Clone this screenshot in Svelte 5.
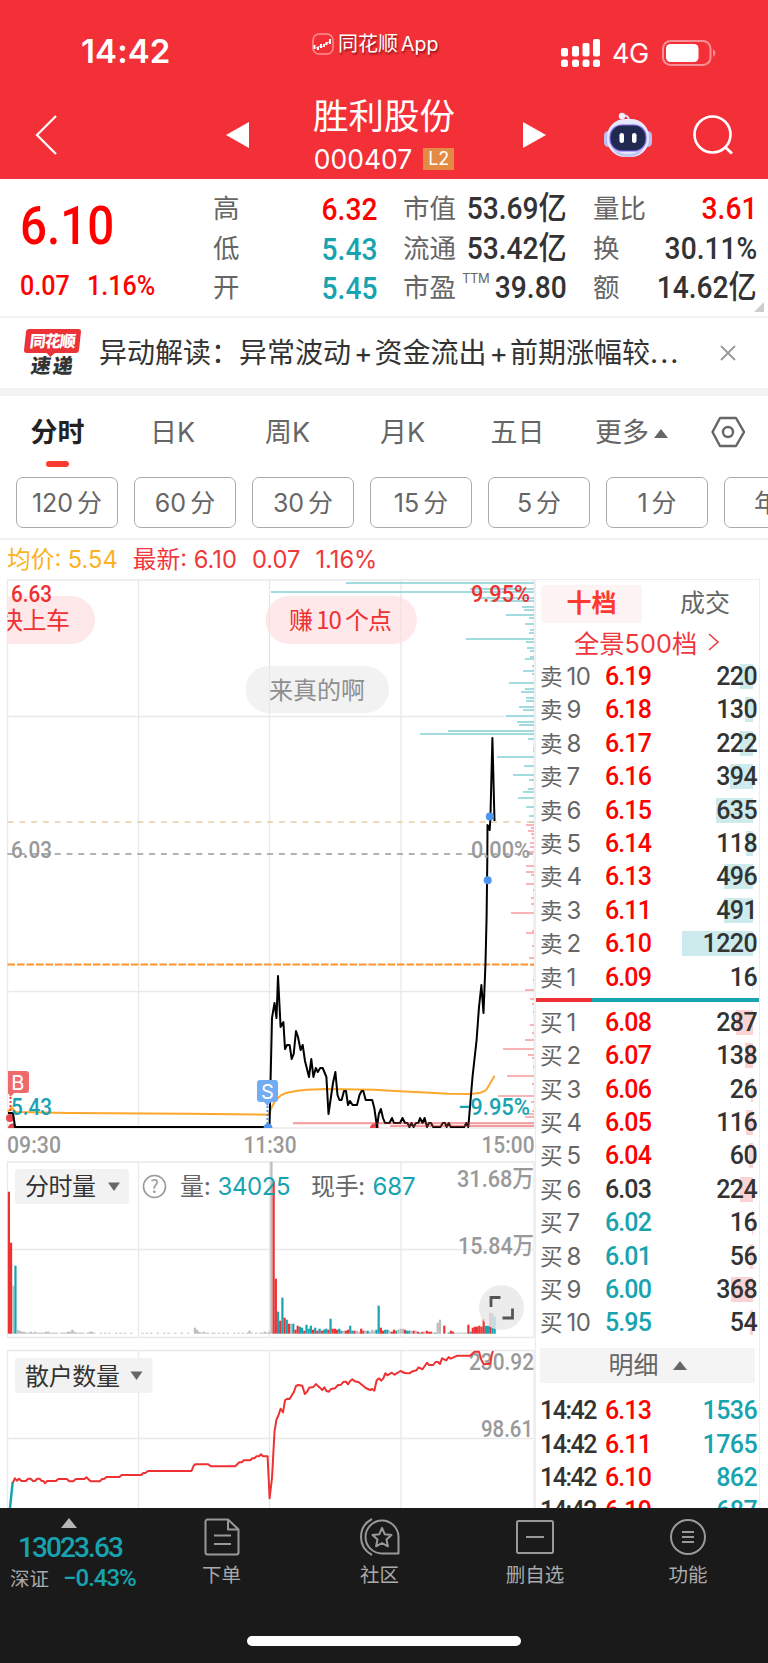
<script lang="ts">
	const stats = [
		[
			{ label: '高', value: '6.32', tone: 'up' },
			{ label: '低', value: '5.43', tone: 'down' },
			{ label: '开', value: '5.45', tone: 'down' }
		],
		[
			{ label: '市值', value: '53.69亿', tone: '' },
			{ label: '流通', value: '53.42亿', tone: '' },
			{ label: '市盈', sup: 'TTM', value: '39.80', tone: '' }
		],
		[
			{ label: '量比', value: '3.61', tone: 'up' },
			{ label: '换', value: '30.11%', tone: '' },
			{ label: '额', value: '14.62亿', tone: '' }
		]
	];

	const tabs = ['分时', '日K', '周K', '月K', '五日'];
	const periods = ['120', '60', '30', '15', '5', '1'];

	const asks = [
		[10, '6.19', 220],
		[9, '6.18', 130],
		[8, '6.17', 222],
		[7, '6.16', 394],
		[6, '6.15', 635],
		[5, '6.14', 118],
		[4, '6.13', 496],
		[3, '6.11', 491],
		[2, '6.10', 1220],
		[1, '6.09', 16]
	];
	const bids = [
		[1, '6.08', 287],
		[2, '6.07', 138],
		[3, '6.06', 26],
		[4, '6.05', 116],
		[5, '6.04', 60],
		[6, '6.03', 224],
		[7, '6.02', 16],
		[8, '6.01', 56],
		[9, '6.00', 368],
		[10, '5.95', 54]
	];
	const trades = [
		['14:42', '6.13', '1536'],
		['14:42', '6.11', '1765'],
		['14:42', '6.10', '862'],
		['14:42', '6.19', '687']
	];

	const prevClose = 6.03;

	function tone(price: any) {
		const p = Number(price);
		if (p > prevClose) return 'up';
		return p < prevClose ? 'down' : '';
	}

	function depthWidth(qty: any) {
		return (qty / 1220) * 71.5;
	}

	// [y, left edge] of each order stack, drawn towards the right border
	const askStacks = [
		[583, 346], [589, 470], [592, 271], [598, 478], [601, 490], [607, 522], [610, 524], [615, 506],
		[618, 529], [624, 525], [630, 530], [633, 529], [639, 466], [642, 526], [648, 527], [651, 530],
		[657, 530], [659, 525], [666, 532], [671, 523], [674, 532], [683, 509], [689, 525], [692, 521],
		[698, 526], [701, 526], [707, 519], [710, 523], [716, 506], [722, 517], [725, 519], [731, 448],
		[734, 420], [739, 528], [748, 533], [751, 533], [757, 497], [766, 524], [775, 513], [780, 529],
		[789, 528], [792, 523], [798, 518], [807, 526], [816, 529], [822, 529]
	];
	const bidStacks = [
		[825, 526], [828, 531], [831, 528], [834, 531], [838, 532], [843, 530], [847, 530], [852, 528],
		[866, 526], [872, 526], [875, 531], [884, 526], [890, 533], [898, 531], [904, 531], [913, 511],
		[933, 526], [931, 532], [946, 532], [958, 529], [965, 531], [980, 533], [990, 525], [999, 530], [1004, 532],
		[1012, 533], [1025, 530], [1033, 532], [1040, 525], [1049, 503], [1055, 528], [1058, 532], [1067, 533],
		[1076, 507], [1084, 532], [1096, 498], [1102, 531], [1111, 532], [1114, 528], [1117, 525], [1123, 293], [1126, 390]
	];

	const priceLine =
		'8,1113 13,1113 15,1127 269.5,1127 272,1018 274.5,1003 276.5,1018 278,976 280.6,1027 283.4,1022 285,1049 287,1045 289.6,1045 291.7,1059 293.7,1054 296,1031 298,1037 300.6,1050 302.7,1045 305,1061 309,1077 311.3,1059 313.4,1077 315.8,1068 317.8,1072 320.2,1068 322.7,1068 326.4,1077 328.5,1114 333,1083 335.4,1072 337.5,1095 339.5,1100 341.6,1100 344,1091 346,1091 348,1105 350,1101 352.6,1105 357,1105 359.5,1095 361.6,1091 363.3,1091 365.7,1100 372.2,1100 374.3,1108 377,1127 378.8,1114 380.9,1109 383,1118 385,1123 389.5,1123 392,1118 394,1123 400,1123 402.5,1118 405,1123 407.4,1123 409.4,1127 411.5,1123 413.6,1127 416,1123 418.4,1123 420,1118 422.5,1123 424.6,1118 427,1127 429,1123 431,1123 433.2,1127 440.4,1127 442.8,1123 445,1123 446.6,1127 448.7,1123 450.8,1127 464.2,1127 466.3,1123 468.3,1127 472.5,1077 476.6,1040 479,1007 481.4,985 483.5,1013 485.5,963 486.6,917 487.3,860 487.5,825 489.7,830 490.4,818 492.4,738 494.5,821';
	const averageLine =
		'8,1112 11.4,1107 15.5,1112 69,1113 189,1113.7 268.6,1114.7 272,1106.7 274.5,1101.7 278,1098 281.3,1095 286,1093 296,1091 306.5,1089.7 327,1089 374.3,1089.7 399.5,1091.3 430.4,1092.7 447.7,1093.7 471.8,1094 480.4,1092.7 485.9,1090.3 489.7,1084.3 494.5,1075.7';
	const retailLine =
		'13,1482.7 14.8,1478.3 16.9,1480.7 19,1478.7 21.4,1481 25.8,1481 28.2,1478.7 30.6,1478.7 33,1481 35,1481 37.2,1478.7 39.6,1478.7 41.7,1481 43.5,1481 45,1483.3 47.2,1481 56,1481 58.2,1479 66.8,1479 69.2,1481.3 73.3,1481.3 75.8,1479 84.4,1479 86.4,1477.3 90.6,1481.3 99.9,1481.3 102,1479 104,1479 106.4,1477 119.5,1477 121.6,1475 141.2,1475 143.3,1473 145.3,1473 148,1471 191.5,1471 193.5,1466 195.2,1464.3 208.3,1464.3 210.7,1466.3 235.2,1466.3 239.3,1462.3 241.7,1462.3 243.8,1460.3 250.3,1460.3 252.4,1458.3 254.5,1458.3 256.5,1456.3 259,1456.3 261,1454.3 263,1456.3 267.6,1456.3 269.6,1498.3 272,1478 274.5,1431.7 276.5,1419.3 278.2,1416 280.6,1408.7 283,1412.3 285,1400.3 287.2,1398.7 289.6,1399 293.7,1392.3 296,1386 298.2,1385 302.3,1385.7 304.8,1394 307,1391.7 309.2,1387.7 313.4,1387 315.8,1384 319.9,1387.7 322.3,1390 324.4,1387.3 326.4,1391 328.9,1391.7 331,1389 335,1388.3 337.5,1385.3 341,1384.7 343.7,1381.7 346,1381.7 348,1384.3 350.2,1381 352.3,1379.3 354.7,1381.3 358.8,1382.3 363.3,1386 365.7,1388 370.2,1390 372.2,1389 374.3,1390.7 376.7,1380.3 379.1,1378.3 381.2,1380.7 383.3,1378.3 385.3,1373.3 387.4,1375.3 391.9,1372.7 394.6,1374.7 400.5,1371 404.6,1373 409.8,1373.3 411.5,1371.7 416.3,1370.3 418.7,1367.3 422.5,1369.3 427,1362.7 429,1365 433.2,1365 435.6,1362 438,1362 440,1364 442,1358.3 446.3,1360.3 448.7,1357 450.8,1358.7 457.3,1355.7 470,1355.7 474.5,1351.7 479,1351.7 481.4,1360 483.8,1364.3 490.4,1363.7 491.7,1355 493,1351';

	// one bar per minute: colour letter followed by its height
	const morning =
		'r142 r91 g48 t68 g4 g3 g2 g2 g1 g1 g2 g1 g2 g1 g1 g1 g1 g2 g2 g1 g1 g1 g1 g0 g1 g1 g1 g2 g2 g4 g2 g1 g1 g1 g1 g0 g1 g2 g2 g1 g0 g0 g1 g0 g1 g0 g1 g0 g0 g1 g0 g1 g0 g1 g0 g0 g1 g0 g0 g0 g0 g1 g0 g1 g0 g1 g0 g0 g1 g0 g0 g1 g0 g1 g0 g0 g1 g0 g0 g1 g0 g0 g1 g0 g0 g6 g4 g2 g1 g2 g1 g1 g0 g1 g1 g0 g1 g0 g1 g0 g1 g0 g0 g1 g0 g1 g0 g1 g0 g1 g3 g1 g0 g1 g0 g1 g1 g2 g1 g2';
	const afternoon =
		'g172 r152 r55 t22 r13 t36 r16 t14 r10 g10 t10 r4 r8 t7 t6 r3 t9 t5 t8 r4 t6 r3 t5 r3 t4 t5 r4 t15 r5 r5 r4 t5 t3 g3 r3 r4 t8 t3 r3 g3 g2 r5 r3 g3 t3 g2 g4 g3 t4 t28 r6 r3 t4 t4 g3 r2 r4 t3 g4 g5 g5 r4 t3 t3 g3 r3 g3 r2 t1 r2 g2 r3 r2 r2 g1 t1 g11 g14 g0 r8 g0 t1 r3 r2 g1 g1 g1 g1 g1 g1 r9 t2 r6 r7 r7 r8 r7 r15 t8 t8 r21 t20 t17';
	const barColors: any = { r: '#ee3133', g: '#bcbcbc', t: '#17a3b0' };
	const volumeBars = (morning + ' ' + afternoon).split(' ').map((s, i) => ({
		x: 7.8 + i * 2.188,
		h: Number(s.slice(1)),
		color: barColors[s[0]]
	}));

	const axisLabels = [
		{ x: 11, y: 602, w: 41, text: '6.63', color: '#ee3133' },
		{ x: 471, y: 602, w: 59, text: '9.95%', color: '#ee3133' },
		{ x: 11, y: 858, w: 41, text: '6.03', color: '#999' },
		{ x: 471, y: 858, w: 59, text: '0.00%', color: '#999' },
		{ x: 11, y: 1115, w: 41, text: '5.43', color: '#17a3b0' },
		{ x: 458, y: 1115, w: 72, text: '−9.95%', color: '#17a3b0' },
		{ x: 7, y: 1152.5, w: 54, text: '09:30', color: '#999' },
		{ x: 243.5, y: 1152.5, w: 53, text: '11:30', color: '#999' },
		{ x: 481.5, y: 1152.5, w: 53, text: '15:00', color: '#999' },
		{ x: 457, y: 1187, w: 77, text: '31.68万', color: '#999' },
		{ x: 458, y: 1254, w: 76, text: '15.84万', color: '#999' },
		{ x: 469, y: 1370, w: 65, text: '230.92', color: '#999' },
		{ x: 481, y: 1437, w: 52, text: '98.61', color: '#999' }
	];
</script>

<div class="app">
	<header>
		<div class="status">
			<span class="time">14:42</span>
			<span class="brand">
				<svg width="22" height="22" viewBox="0 0 22 22" fill="none" stroke="#fff">
					<rect x="1" y="1" width="20" height="20" rx="6" stroke="#ff8f92" stroke-width="1.5" />
					<path d="M2.500 12v4M6 14v3M9 11v4M12 11v3M14.500 9v3M18 6v5" stroke-width="2" />
					<path d="m4 15 4-2 3 1 3-4 4-1" stroke-width=".8" />
				</svg>
				<span>同花顺<b>App</b></span>
			</span>
			<span class="signal">
				<svg width="40" height="28" viewBox="0 0 40 28" fill="#fff">
					<rect x="0" y="9" width="7" height="8.500" rx="2" />
					<rect x="11" y="7" width="7" height="10.500" rx="2" />
					<rect x="21.500" y="4" width="7" height="13.500" rx="2" />
					<rect x="32" y="0" width="7" height="17.500" rx="2" />
					{#each [0, 11, 21.5, 32] as x}
						<rect {x} y="20.500" width="7" height="7.500" rx="2.500" />
					{/each}
				</svg>
				<span class="net">4G</span>
				<svg width="54" height="26" viewBox="0 0 54 26">
					<rect x="1" y="1" width="47.500" height="24" rx="7.500" fill="none" stroke="#f98f94" stroke-width="2" />
					<rect x="4" y="4" width="32.500" height="18" rx="4.500" fill="#fff" />
					<path d="M51 9q5 4 0 8z" fill="#f98f94" />
				</svg>
			</span>
		</div>
		<div class="titlebar">
			<svg class="back" width="24" height="42" viewBox="0 0 24 42" fill="none" stroke="#fff" stroke-width="2.200">
				<path d="M21 2 2 21l19 19" />
			</svg>
			<svg class="prev" width="23" height="26" viewBox="0 0 23 26"><path d="M0 13 23 0v26z" fill="#fff" /></svg>
			<div class="stock">
				<h1>胜利股份</h1>
				<p>000407<span class="level">L2</span></p>
			</div>
			<svg class="next" width="23" height="26" viewBox="0 0 23 26"><path d="M23 13 0 0v26z" fill="#fff" /></svg>
			<svg class="robot" width="48" height="46" viewBox="0 0 48 46">
				<path d="M17 4q8-2 8 5" fill="none" stroke="#e5e3ff" stroke-width="2" />
				<circle cx="18" cy="4" r="3.200" fill="#f3efff" />
				<rect x="0" y="19" width="9" height="16" rx="4.500" fill="#b9bff2" />
				<rect x="39" y="19" width="9" height="16" rx="4.500" fill="#b9bff2" />
				<rect x="3" y="7" width="42" height="38" rx="18" fill="#e6e8fb" />
				<path d="M8 36q16 12 32 0-5 9-16 9T8 36" fill="#c2c7ef" />
				<rect x="6" y="13" width="36" height="26" rx="12" fill="#202a51" stroke="#8064e8" stroke-width="1.200" />
				<rect x="15.500" y="21" width="4.500" height="10" rx="2.200" fill="#fff" />
				<rect x="28" y="21" width="4.500" height="10" rx="2.200" fill="#fff" />
			</svg>
			<svg class="search" width="41" height="40" viewBox="0 0 41 40" fill="none" stroke="#fff" stroke-width="2.600">
				<circle cx="19.500" cy="19.500" r="18" />
				<path d="m32 32 7 6.500" stroke-width="3" />
			</svg>
		</div>
	</header>

	<section class="quote">
		<div class="last up">
			<strong class="din">6.10</strong>
			<p><span class="din">0.07</span><span class="din">1.16%</span></p>
		</div>
		{#each stats as column, i}
			<dl class="col{i}">
				{#each column as item}
					<div>
						<dt>{item.label}{#if item.sup}<sup>{item.sup}</sup>{/if}</dt>
						<dd class={item.tone}><span class="din">{item.value}</span></dd>
					</div>
				{/each}
			</dl>
		{/each}
		<i class="corner"></i>
	</section>

	<section class="news">
		<div class="logo">
			<span>同花顺</span>
			<b>速递</b>
		</div>
		<p>异动解读：异常波动<i>+</i>资金流出<i>+</i>前期涨幅较<em>...</em></p>
		<svg width="16" height="16" viewBox="0 0 16 16" stroke="#999" stroke-width="1.800"><path d="m1 1 14 14M15 1 1 15" /></svg>
	</section>

	<nav class="tabs">
		{#each tabs as tab, i}
			<span class:active={i === 0}>{tab}</span>
		{/each}
		<span class="more">更多<i></i></span>
		<svg width="34" height="32" viewBox="0 0 34 32" fill="none" stroke="#666" stroke-width="2.400" stroke-linejoin="round">
			<path d="M9 2h16l8 14-8 14H9L1.500 16z" />
			<circle cx="17" cy="16" r="5" />
		</svg>
	</nav>

	<div class="periods">
		{#each periods as p}
			<span>{p}<b>分</b></span>
		{/each}
		<span>年K</span>
	</div>

	<p class="summary"><span class="avg">均价: 5.54</span><span>最新: 6.10</span><span>0.07</span><span>1.16%</span></p>

	<main>
		<svg class="charts" width="535" height="929" viewBox="0 579 535 929">
			<defs>
				<clipPath id="plot"><rect x="7.500" y="579" width="527" height="929" /></clipPath>
			</defs>
			<g fill="none" stroke="#e9e9e9" stroke-width="1.300">
				<path d="M7.500 580H534V1128H7.500zM7.500 716.500H534M7.500 991.500H534" />
				<path d="M7.500 1162H534V1337.500H7.500zM7.500 1249.500H534" />
				<path d="M7.500 1508V1350.500H534V1508M7.500 1438.500H534" />
				{#each [138.5, 269.5, 401] as x}
					<path d="M{x} 580V1128M{x} 1162V1337M{x} 1350V1508" />
				{/each}
			</g>

			{#each askStacks as [y, x]}
				<rect {x} y={y - 1} width={534 - x} height="2" fill="#a3dce0" />
			{/each}
			{#each bidStacks as [y, x]}
				<rect {x} y={y - 1} width={534 - x} height="2" fill="#f9b4b7" />
			{/each}

			<g fill="none" stroke-width="1.700">
				<path d="M7.500 822H534" stroke="#e9cda6" stroke-dasharray="6 5.800" />
				<path d="M7.500 854H534" stroke="#999" stroke-dasharray="6 5.800" />
				<path d="M7.500 964.500H534" stroke="#ff9430" stroke-width="2" stroke-dasharray="7.500 2" />
			</g>

			<g clip-path="url(#plot)">
				<rect x="-40" y="596" width="135" height="48" rx="24" fill="#ffe8e9" />
				<rect x="265.500" y="596" width="151.500" height="48" rx="24" fill="#ffe8e9" />
				<rect x="245.500" y="666" width="143.500" height="47" rx="23.500" fill="#f2f2f2" />
				<g class="cjk" font-size="24">
					<text x="-1" y="629" fill="#ee3133" textLength="71">快上车</text>
					<text x="289" y="629" fill="#ee3133" textLength="103">赚 10 个点</text>
					<text x="269" y="699" fill="#8e8e8e" textLength="96">来真的啊</text>
				</g>
			</g>
			<path d="M269.500 596V713M401 596V644" stroke="#e3d9da" opacity=".5" />

			<polyline points={averageLine} fill="none" stroke="#fca72e" stroke-width="2" />
			<g fill="#e9474c">
				<circle cx="10" cy="1118" r="4" />
				<path d="M8 1128a4.500 4.500 0 0 1 9 0zM370 1128a4.500 4.500 0 0 1 9 0z" />
			</g>
			<polyline points={priceLine} fill="none" stroke="#000" stroke-width="2" stroke-linejoin="round" />
			<path d="M293 1123.500H534M390 1126H534" stroke="#f0666a" stroke-width="2" opacity=".3" />
			<g fill="#4e95f1">
				<circle cx="489.800" cy="816.500" r="4" />
				<circle cx="487.700" cy="880.300" r="4" />
				<path d="M263.500 1128a4.500 4.500 0 0 1 9 0z" />
			</g>
			<path d="M10.500 1093V1113" stroke="#e9474c" stroke-width="2" stroke-dasharray="2 2" />
			<path d="M267.500 1102V1124" stroke="#4e95f1" stroke-width="2" stroke-dasharray="2 2" />
			<path d="M8 1071H26a3 3 0 0 1 3 3V1090a3 3 0 0 1-3 3H14l-3.500 4-2.500-4z" fill="#ef6a6d" />
			<path d="M260 1080H275a3 3 0 0 1 3 3V1099a3 3 0 0 1-3 3H271l-3.500 4-3.500-4H260a3 3 0 0 1-3-3V1083a3 3 0 0 1 3-3z" fill="#73acf3" />
			<g class="tag" font-size="20" fill="#fff" text-anchor="middle">
				<text x="17.800" y="1089.500">B</text>
				<text x="267.500" y="1099">S</text>
			</g>

			{#each volumeBars as bar}
				<rect x={bar.x} y={1333.7 - bar.h} width="2.200" height={bar.h} fill={bar.color} />
			{/each}
			<rect x="15" y="1169" width="114" height="35" rx="4" fill="#f2f2f2" />
			<path d="M108 1182.500H120L114 1191z" fill="#666" />
			<circle cx="154.500" cy="1186.500" r="11" fill="none" stroke="#999" stroke-width="1.600" />
			<g class="cjk" font-size="24">
				<text x="25" y="1195" fill="#333" textLength="71">分时量</text>
				<text x="150.200" y="1193" fill="#999" font-size="18">?</text>
				<text x="180" y="1195" fill="#666">量:</text>
				<text x="217.500" y="1195" class="num" fill="#17a3b0" textLength="73">34025</text>
				<text x="311" y="1195" fill="#666" textLength="54">现手:</text>
				<text x="372.500" y="1195" class="num" fill="#17a3b0" textLength="43">687</text>
			</g>
			<circle cx="501.500" cy="1307.500" r="22.500" fill="#e8e8e8" opacity=".82" />
			<path d="M491 1307V1297.500H500.500M512.500 1308.500V1318H502.500" fill="none" stroke="#555" stroke-width="2.800" />

			<rect x="15" y="1358" width="137.500" height="35" rx="4" fill="#f2f2f2" />
			<path d="M130.500 1371.500H142.500L136.500 1380z" fill="#666" />
			<text class="cjk" x="25" y="1385" font-size="24" fill="#333" textLength="95">散户数量</text>

			<g class="axis" font-size="24">
				{#each axisLabels as label}
					<text x={label.x} y={label.y} fill={label.color} textLength={label.w} lengthAdjust="spacingAndGlyphs">{label.text}</text>
				{/each}
			</g>
			<path d="M10 1508 12.700 1482" stroke="#17a3b0" stroke-width="2.500" />
			<polyline points={retailLine} fill="none" stroke="#ee3133" stroke-width="2" stroke-linejoin="round" />
		</svg>

		<aside>
			<div class="switch">
				<b>十档</b>
				<span>成交</span>
			</div>
			<p class="depth-link">全景500档
				<svg width="12" height="18" viewBox="0 0 12 18" fill="none" stroke="#f0373b" stroke-width="1.500"><path d="m1 1 9 8-9 8" /></svg>
			</p>
			{#each asks as [level, price, qty]}
				<div class="row">
					<span class="level-name">卖<i>{level}</i></span>
					<span class="price {tone(price)}">{price}</span>
					<span class="qty"><i class="ask" style="width: {depthWidth(qty)}px"></i>{qty}</span>
				</div>
			{/each}
			<div class="balance"></div>
			{#each bids as [level, price, qty]}
				<div class="row">
					<span class="level-name">买<i>{level}</i></span>
					<span class="price {tone(price)}">{price}</span>
					<span class="qty"><i class="bid" style="width: {depthWidth(qty)}px"></i>{qty}</span>
				</div>
			{/each}
			<div class="detail">明细<i></i></div>
			{#each trades as [time, price, qty]}
				<div class="row">
					<span class="clock">{time}</span>
					<span class="price up">{price}</span>
					<span class="qty down">{qty}</span>
				</div>
			{/each}
		</aside>
	</main>

	<footer>
		<div class="index">
			<i></i>
			<strong class="down">13023.63</strong>
			<p>深证<span class="down">−0.43%</span></p>
		</div>
		<div class="item order">
			<svg width="36" height="38" viewBox="0 0 36 38">
				<path d="M24 1.500H3.500a2 2 0 0 0-2 2v31a2 2 0 0 0 2 2h29a2 2 0 0 0 2-2V11.500zV11.500H34M10 17.500H27M10 26H27" />
			</svg>
			下单
		</div>
		<div class="item club">
			<svg width="42" height="38" viewBox="0 0 42 38">
				<path d="M13 1Q2 7 2 19t11 18" />
				<path d="M39.500 35.500V19a16.500 16.500 0 1 0-16.500 16.500z" />
				<path d="m23 10 2.800 6.300 6.700.7-5 4.600 1.400 6.700L23 25l-5.900 3.300 1.400-6.700-5-4.600 6.700-.7z" />
			</svg>
			社区
		</div>
		<div class="item remove">
			<svg width="40" height="38" viewBox="0 0 40 38">
				<rect x="2" y="3" width="36" height="32" rx="1.500" />
				<path d="M11 19H29" />
			</svg>
			删自选
		</div>
		<div class="item menu">
			<svg width="38" height="38" viewBox="0 0 38 38">
				<circle cx="19" cy="19" r="17" />
				<path d="M13 14H25M13 19H25M13 24H25" />
			</svg>
			功能
		</div>
		<div class="home"></div>
	</footer>
</div>

<style>
	:global(body) {
		margin: 0;
		background: #fff;
	}

	.app {
		width: 768px;
		height: 1663px;
		overflow: hidden;
		display: flex;
		flex-direction: column;
		font-family: Inter, 'Noto Sans CJK SC', sans-serif;
		color: #333;
	}

	p,
	h1,
	dl,
	dd {
		margin: 0;
	}

	i,
	em {
		font-style: normal;
	}

	.up {
		color: #f00;
	}

	.down {
		color: #17a3b0;
	}

	.din {
		display: inline-block;
		font-family: Roboto, 'Noto Sans CJK SC', sans-serif;
		font-weight: 500;
		transform: scaleX(0.88);
	}

	header {
		height: 179px;
		flex: none;
		background: #f33038;
		color: #fff;
	}

	.status {
		height: 90px;
		display: flex;
		align-items: flex-start;
	}

	.time {
		width: 231px;
		margin: 30px 0 0 81px;
		font-size: 33px;
		line-height: 42px;
		font-weight: 600;
		letter-spacing: 0.1px;
	}

	.brand {
		width: 249px;
		display: flex;
		align-items: center;
		gap: 4px;
		margin-top: 29px;
		font-size: 20px;
		line-height: 30px;
		white-space: nowrap;
		text-shadow: 1px 2px 2px rgba(80, 0, 0, 0.6);
	}

	.brand b {
		margin-left: 3px;
		font-weight: 400;
		font-size: 19.5px;
	}

	.signal {
		display: flex;
		align-items: center;
		margin-top: 37px;
	}

	.net {
		width: 61px;
		padding-left: 11px;
		box-sizing: border-box;
		font-size: 27px;
		line-height: 30px;
		padding-top: 2px;
		letter-spacing: -0.5px;
	}

	.signal svg:last-child {
		flex: none;
	}

	.titlebar {
		height: 89px;
		display: flex;
		align-items: center;
		padding-left: 35px;
	}

	.prev {
		margin-left: 167px;
	}

	.stock {
		width: 268px;
		text-align: center;
		margin-left: 1px;
	}

	.stock h1 {
		margin-top: -2px;
		font-size: 35.5px;
		line-height: 50px;
		font-weight: 400;
	}

	.stock p {
		display: flex;
		justify-content: center;
		align-items: center;
		margin-top: 2px;
		font-size: 26.5px;
		line-height: 30px;
		padding-bottom: 2px;
	}

	.level {
		width: 31px;
		height: 22px;
		margin-left: 11px;
		background: #e38b45;
		font-size: 18px;
		line-height: 22px;
	}

	.next {
		margin-left: 5px;
	}

	.robot {
		margin-left: 58px;
	}

	.search {
		margin-left: 41px;
	}

	.quote {
		height: 138px;
		flex: none;
		box-sizing: border-box;
		border-bottom: 2px solid #f2f2f2;
		display: flex;
		padding-top: 9px;
		margin-top: 1px;
		position: relative;
	}

	.last {
		width: 193px;
		padding-left: 20px;
	}

	.last .din {
		transform-origin: left;
	}

	.last strong {
		font-size: 54px;
		line-height: 73px;
		display: block;
	}

	.last p {
		margin-top: -2px;
		font-size: 28.5px;
		line-height: 50px;
	}

	.last p .din:last-child {
		margin-left: 10px;
	}

	dl div {
		display: flex;
		justify-content: space-between;
		height: 39.5px;
		line-height: 39.5px;
		white-space: nowrap;
	}

	dt {
		font-size: 26.5px;
		color: #666;
	}

	dd {
		font-size: 32px;
	}

	dd .din {
		transform-origin: right;
	}

	.col0 {
		width: 164px;
	}

	.col1 {
		width: 164px;
		margin-left: 26px;
	}

	.col2 {
		width: 164px;
		margin-left: 26px;
	}

	.col1 dd,
	.col2 dd {
		width: 0;
		display: flex;
		justify-content: flex-end;
	}

	sup {
		font-size: 13px;
		line-height: 1;
		letter-spacing: -0.4px;
		margin-left: 6px;
		vertical-align: 14px;
	}

	.corner {
		position: absolute;
		right: 4px;
		bottom: 4px;
		border: 5px solid;
		border-color: transparent #ccc #ccc transparent;
	}

	.news {
		height: 70px;
		flex: none;
		display: flex;
		align-items: center;
		padding-left: 25px;
		border-bottom: 8px solid #f3f3f3;
	}

	.logo {
		width: 74px;
		height: 49px;
		display: flex;
		flex-direction: column;
		text-align: center;
		font-weight: 900;
	}

	.logo span {
		width: 55px;
		height: 25px;
		border-radius: 3px;
		background: #eb3237;
		color: #fff;
		font-size: 16px;
		line-height: 24px;
		letter-spacing: -1px;
		transform: skewX(-6deg);
		position: relative;
	}

	.logo span::after {
		content: '';
		position: absolute;
		left: 23px;
		top: 24px;
		border: 4px solid transparent;
		border-top-color: #eb3237;
		border-bottom: 0;
	}

	.logo b {
		width: 56px;
		font-size: 20px;
		line-height: 27px;
		font-weight: 900;
		letter-spacing: 2px;
		transform: skewX(-8deg);
	}

	.news p {
		width: 621px;
		font-size: 28px;
		line-height: 42px;
		white-space: nowrap;
	}

	.news p i {
		margin: 0 2px 0 3px;
	}

	.news p em {
		letter-spacing: 2px;
	}

	.tabs {
		height: 81px;
		flex: none;
		display: flex;
		color: #666;
		font-size: 27px;
		line-height: 74px;
	}

	.tabs span {
		flex: none;
		width: 115px;
		text-align: center;
		position: relative;
	}

	.tabs .active {
		font-weight: 700;
		color: #222;
	}

	.tabs .active::after {
		content: '';
		position: absolute;
		left: 46px;
		top: 65px;
		width: 23px;
		height: 6px;
		border-radius: 3px;
		background: #ff3b30;
	}

	.tabs .more {
		width: 116px;
		padding-left: 20px;
		box-sizing: border-box;
		display: flex;
		align-items: center;
		height: 74px;
	}

	.tabs .more i,
	.detail i,
	.index i {
		margin-left: 5px;
		border: 7px solid transparent;
		border-top: 0;
		border-bottom: 9px solid #666;
	}

	.tabs svg {
		margin: 20px 0 0 20px;
	}

	.periods {
		height: 61px;
		flex: none;
		display: flex;
		gap: 16px;
		padding-left: 16px;
		border-bottom: 2px solid #f1f1f1;
		overflow: hidden;
	}

	.periods span {
		flex: none;
		width: 102px;
		height: 51px;
		box-sizing: border-box;
		border: 1.5px solid #aaa;
		border-radius: 7px;
		color: #666;
		font-size: 25px;
		line-height: 51px;
		text-align: center;
	}

	.periods b {
		font-weight: 400;
		margin-left: 4px;
	}

	.summary {
		height: 39px;
		flex: none;
		display: flex;
		gap: 15px;
		padding-left: 7px;
		font-size: 23.7px;
		line-height: 40px;
		color: #f0373b;
	}

	.avg {
		color: #fbb322;
	}

	main {
		height: 929px;
		flex: none;
		display: flex;
		overflow: hidden;
	}

	.charts {
		flex: none;
	}

	.cjk {
		font-family: 'Noto Sans CJK SC', sans-serif;
	}

	.num {
		font-family: Inter, sans-serif;
	}

	.axis {
		font-family: Roboto, 'Noto Sans CJK SC', sans-serif;
		font-weight: 500;
	}

	.tag {
		font-family: Inter, sans-serif;
	}

	aside {
		width: 225px;
		box-sizing: border-box;
		border: solid #ededed;
		border-width: 1px 1px 0;
	}

	.switch {
		display: flex;
		height: 43px;
		padding: 5px 0 0 5px;
		box-sizing: border-box;
		font-size: 25px;
		line-height: 37px;
		text-align: center;
	}

	.switch b {
		flex: none;
		width: 101px;
		border-radius: 4px;
		background: #fff4f4;
		color: #ff3830;
	}

	.switch span {
		flex: none;
		width: 126px;
		color: #666;
	}

	.depth-link {
		height: 37px;
		padding-left: 38px;
		display: flex;
		align-items: center;
		gap: 11px;
		color: #f0373b;
		font-size: 25.3px;
		white-space: nowrap;
	}

	.row {
		display: flex;
		height: 33.4px;
		line-height: 33.4px;
		padding-left: 4px;
		font-family: Roboto, sans-serif;
		font-size: 25px;
		font-weight: 500;
	}

	.level-name {
		width: 65px;
		flex: none;
		display: flex;
		gap: 4px;
		color: #666;
		font: 400 22.5px/31px 'Noto Sans CJK SC', sans-serif;
	}

	.level-name i {
		font: 400 24px/33px Inter, sans-serif;
		letter-spacing: -0.6px;
	}

	.clock {
		flex: none;
		width: 65px;
		letter-spacing: -1.5px;
	}

	.price {
		width: 61px;
		letter-spacing: -0.9px;
	}

	.qty {
		width: 91px;
		text-align: right;
		position: relative;
		z-index: 0;
		letter-spacing: -0.6px;
	}

	.qty i {
		position: absolute;
		z-index: -1;
		right: 4px;
		top: 4px;
		height: 25px;
	}

	.ask {
		background: #cdebed;
	}

	.bid {
		background: #fbd3d5;
	}

	.balance {
		height: 4px;
		margin: 4px 0;
		background: linear-gradient(90deg, #ee3133 25%, #17a3b0 25%);
	}

	.detail {
		width: 215px;
		height: 35px;
		margin: 8px 0 11.5px 4px;
		display: flex;
		align-items: center;
		justify-content: center;
		background: #f4f4f4;
		color: #666;
		font-size: 25px;
		line-height: 33px;
	}

	.detail i {
		margin-left: 14px;
	}

	footer {
		height: 155px;
		flex: none;
		background: #1a1a1a;
		position: relative;
		display: flex;
		color: #aaa;
	}

	.index {
		flex: none;
		width: 170px;
		padding: 10px 0 0 10px;
		box-sizing: border-box;
	}

	.index i {
		display: block;
		width: 0;
		margin-left: 51px;
		border-width: 0 8px 10px;
		border-bottom-color: #b5b5b5;
	}

	.index strong {
		display: block;
		margin: 3px 0 0 8px;
		font: 500 28px/34px Roboto, sans-serif;
		letter-spacing: -1.9px;
	}

	.index p {
		display: flex;
		margin-top: -2px;
		font-size: 19.5px;
		line-height: 32px;
	}

	.index p span {
		margin-left: 14px;
		font: 500 24px/30px Roboto, sans-serif;
		letter-spacing: -1px;
	}

	.item {
		flex: none;
		display: flex;
		flex-direction: column;
		align-items: center;
		padding-top: 10px;
		font-size: 19.5px;
		line-height: 38px;
	}

	.item svg {
		fill: none;
		stroke: #999;
		stroke-width: 2;
		stroke-linejoin: round;
	}

	.order {
		width: 103px;
	}

	.club {
		width: 213px;
	}

	.remove {
		width: 98px;
	}

	.menu {
		width: 158px;
		padding-left: 25px;
	}

	.home {
		position: absolute;
		left: 247px;
		bottom: 17px;
		width: 274px;
		height: 10px;
		border-radius: 5px;
		background: #fff;
	}
</style>
